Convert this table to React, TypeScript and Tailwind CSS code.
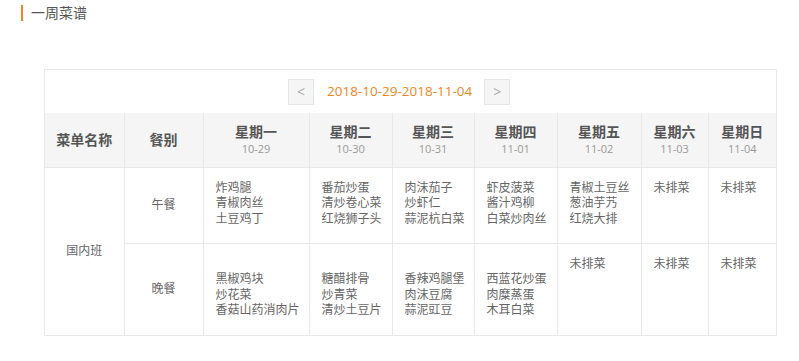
import React from "react";

const days = [
  { name: "星期一", date: "10-29" },
  { name: "星期二", date: "10-30" },
  { name: "星期三", date: "10-31" },
  { name: "星期四", date: "11-01" },
  { name: "星期五", date: "11-02" },
  { name: "星期六", date: "11-03" },
  { name: "星期日", date: "11-04" },
];

const lunch: string[][] = [
  ["炸鸡腿", "青椒肉丝", "土豆鸡丁"],
  ["番茄炒蛋", "清炒卷心菜", "红烧狮子头"],
  ["肉沫茄子", "炒虾仁", "蒜泥杭白菜"],
  ["虾皮菠菜", "酱汁鸡柳", "白菜炒肉丝"],
  ["青椒土豆丝", "葱油芋艿", "红烧大排"],
  [],
  [],
];

// first line left empty on purpose, the dinner lists start one line lower
const dinner: string[][] = [
  ["", "黑椒鸡块", "炒花菜", "香菇山药消肉片"],
  ["", "糖醋排骨", "炒青菜", "清炒土豆片"],
  ["", "香辣鸡腿堡", "肉沫豆腐", "蒜泥豇豆"],
  ["", "西蓝花炒蛋", "肉糜蒸蛋", "木耳白菜"],
  [],
  [],
  [],
];

const widths = ["w-[79px]", "w-[79px]", "w-[106px]", "w-[83px]", "w-[82px]", "w-[83px]", "w-[84px]", "w-[67px]", "w-[68px]"];

function MenuCell({ items }: { items: string[] }) {
  const lines = items.length ? items : ["未排菜"];
  return (
    <td className="border border-[#e8e8e8] align-top pl-3 pt-3">
      {lines.map((l, i) => (
        <div key={i} className="h-[15.5px] leading-[15.5px] whitespace-nowrap">
          {l}
        </div>
      ))}
    </td>
  );
}

export default function App() {
  return (
    <div className="w-[799px] h-[361px] bg-white font-['Open_Sans','Noto_Sans_CJK_SC',sans-serif] overflow-hidden">
      {/* Title */}
      <div className="flex items-center ml-[21px] mt-[5px] h-4">
        <div className="w-[2px] h-4 bg-[#f0851f]" />
        <span className="ml-2 text-[14px] text-[#555] leading-4">一周菜谱</span>
      </div>

      {/* Week menu */}
      <div className="ml-[44px] mt-[48px] w-[733px] border border-[#e8e8e8]">
        <div className="h-[43px] flex items-center pl-[243px]">
          <button className="w-[26px] h-[26px] flex items-center justify-center bg-[#f5f5f5] border border-[#e6e6e6] text-[#aaa] text-[14px]">
            &lt;
          </button>
          <span className="ml-[13px] text-[13.5px] text-[#f0851f]">2018-10-29-2018-11-04</span>
          <button className="ml-[12px] w-[26px] h-[26px] flex items-center justify-center bg-[#f5f5f5] border border-[#e6e6e6] text-[#aaa] text-[14px]">
            &gt;
          </button>
        </div>

        <table className="w-full table-fixed border-collapse border-hidden text-[12px] text-[#666]">
          <colgroup>
            {widths.map((w, i) => (
              <col key={i} className={w} />
            ))}
          </colgroup>
          <thead>
            <tr className="h-[54px] bg-[#f5f5f5]">
              <th className="border border-[#e8e8e8] text-[14px] font-bold text-[#555]">菜单名称</th>
              <th className="border border-[#e8e8e8] text-[14px] font-bold text-[#555]">餐别</th>
              {days.map((d) => (
                <th key={d.name} className="border border-[#e8e8e8] font-normal">
                  <div className="text-[14px] font-bold text-[#555] leading-[18px]">{d.name}</div>
                  <div className="text-[11px] text-[#999] leading-[16px]">{d.date}</div>
                </th>
              ))}
            </tr>
          </thead>
          <tbody>
            <tr className="h-[76px]">
              <td rowSpan={2} className="border border-[#e8e8e8] text-center align-middle">
                国内班
              </td>
              <td className="border border-[#e8e8e8] text-center align-middle">午餐</td>
              {lunch.map((items, i) => (
                <MenuCell key={i} items={items} />
              ))}
            </tr>
            <tr className="h-[92px]">
              <td className="border border-[#e8e8e8] text-center align-middle">晚餐</td>
              {dinner.map((items, i) => (
                <MenuCell key={i} items={items} />
              ))}
            </tr>
          </tbody>
        </table>
      </div>
    </div>
  );
}
